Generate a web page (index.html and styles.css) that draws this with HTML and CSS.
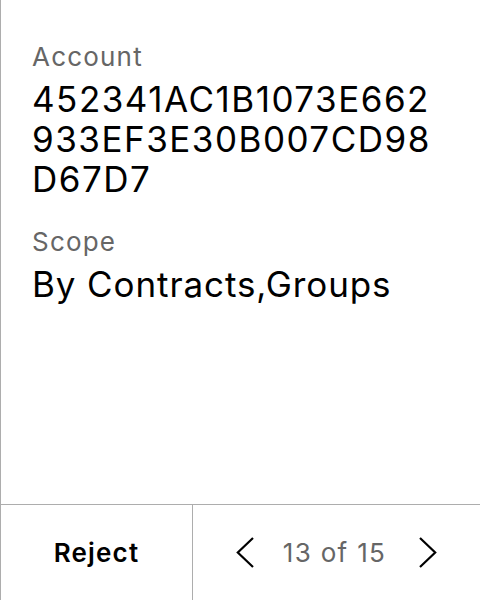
FILE: index.html
```html
<!DOCTYPE html>
<html>
<head>
<meta charset="utf-8">
<link rel="stylesheet" href="styles.css">
</head>
<body>
<div class="panel">
  <div class="content">
    <div class="field">
      <div class="label">Account</div>
      <div class="value hex">452341AC1B1073E662933EF3E30B007CD98D67D7</div>
    </div>
    <div class="field">
      <div class="label">Scope</div>
      <div class="value">By Contracts,Groups</div>
    </div>
  </div>
  <div class="footer">
    <div class="reject">Reject</div>
    <div class="pager">
      <svg class="chev" width="18" height="31" viewBox="0 0 18 31"><path d="M17 1 L1.8 15.5 L17 30" fill="none" stroke="#000" stroke-width="2.2"/></svg>
      <span class="count">13 of 15</span>
      <svg class="chev" width="18" height="31" viewBox="0 0 18 31"><path d="M1 1 L16.2 15.5 L1 30" fill="none" stroke="#000" stroke-width="2.2"/></svg>
    </div>
  </div>
</div>
</body>
</html>
```

FILE: styles.css
```css
html, body {
  margin: 0;
  padding: 0;
  background: #fff;
}
body {
  font-family: Inter, "Noto Sans", sans-serif;
  color: #000;
}
.panel {
  height: 600px;
  border-left: 1px solid #adadad;
  display: flex;
  flex-direction: column;
  box-sizing: border-box;
}
.content {
  flex: 1;
  padding: 41px 40px 0 31px;
  display: flex;
  flex-direction: column;
  gap: 27px;
}
.label {
  font-size: 26px;
  line-height: 32px;
  letter-spacing: 1.2px;
  color: #666;
}
.value {
  font-size: 35px;
  line-height: 40px;
  letter-spacing: 0.9px;
  margin-top: 6px;
}
.hex {
  word-break: break-all;
  letter-spacing: 1.5px;
  max-width: 405px;
}
.footer {
  height: 96px;
  box-sizing: border-box;
  border-top: 1px solid #adadad;
  display: grid;
  grid-template-columns: 192px 1fr;
}
.reject {
  border-right: 1px solid #adadad;
  display: flex;
  align-items: center;
  justify-content: center;
  font-size: 26px;
  font-weight: 600;
  letter-spacing: 1.2px;
}
.pager {
  display: flex;
  align-items: center;
  justify-content: center;
}
.count {
  font-size: 26px;
  letter-spacing: 1.3px;
  color: #666;
  margin: 0 33px 0 29px;
}
.chev {
  display: block;
}
```
